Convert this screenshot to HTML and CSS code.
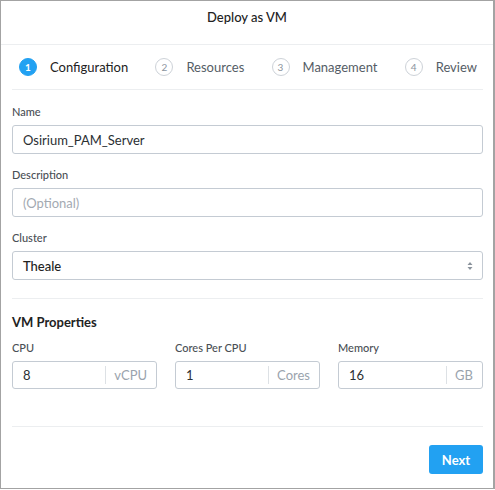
FILE: index.html
```html
<!DOCTYPE html>
<html>
<head>
<meta charset="utf-8">
<link rel="stylesheet" href="styles.css">
</head>
<body>
<div class="frame">
  <div class="header">Deploy as VM</div>
  <div class="steps">
    <div class="step active"><span class="num">1</span><span class="label">Configuration</span></div>
    <div class="step"><span class="num">2</span><span class="label">Resources</span></div>
    <div class="step"><span class="num">3</span><span class="label">Management</span></div>
    <div class="step"><span class="num">4</span><span class="label">Review</span></div>
  </div>
  <div class="form">
    <div class="field first">
      <div class="flabel">Name</div>
      <div class="input">Osirium_PAM_Server</div>
    </div>
    <div class="field">
      <div class="flabel">Description</div>
      <div class="input placeholder">(Optional)</div>
    </div>
    <div class="field">
      <div class="flabel">Cluster</div>
      <div class="input select"><span class="strong">Theale</span>
        <svg class="arrows" width="6" height="10" viewBox="0 0 6 10"><path d="M3 1 L5.5 4 H0.5 Z M3 9 L5.5 6 H0.5 Z" fill="#8a929b"/></svg>
      </div>
    </div>
    <div class="sep"></div>
    <div class="section">VM Properties</div>
    <div class="props">
      <div class="prop">
        <div class="flabel">CPU</div>
        <div class="input unit"><span class="val">8</span><span class="u">vCPU</span></div>
      </div>
      <div class="prop">
        <div class="flabel">Cores Per CPU</div>
        <div class="input unit"><span class="val">1</span><span class="u">Cores</span></div>
      </div>
      <div class="prop">
        <div class="flabel">Memory</div>
        <div class="input unit"><span class="val">16</span><span class="u">GB</span></div>
      </div>
    </div>
    <div class="sep sep2"></div>
    <div class="footer"><button class="next">Next</button></div>
  </div>
</div>
</body>
</html>
```

FILE: styles.css
```css
* { box-sizing: border-box; }
html, body { margin: 0; padding: 0; background: #fff; }
body { font-family: "Lato", "Open Sans", sans-serif; color: #333; }
.frame {
  width: 495px;
  height: 489px;
  border: 1px solid #a3a3a3;
  border-right-width: 2px;
  background: #fff;
}
.header {
  height: 44px;
  border-bottom: 1px solid #eceef0;
  text-align: center;
  font-size: 13px;
  font-weight: 500;
  line-height: 16px;
  padding-top: 8px;
  color: #222;
}
.steps {
  margin: 0 10px 0 11px;
  height: 45px;
  border-bottom: 1px solid #eceef0;
  display: flex;
  align-items: center;
  justify-content: space-between;
  padding: 0 6px 0 7px;
}
.step { display: flex; align-items: center; gap: 13px; }
.num {
  width: 18px; height: 18px; border-radius: 50%;
  border: 1px solid #cdd2d8;
  display: flex; align-items: center; justify-content: center;
  font-size: 10px; color: #8b949e;
}
.step .label { font-size: 13px; color: #555d66; }
.step.active .num { background: #22a1f2; border-color: #22a1f2; color: #fff; font-weight: 700; }
.step.active .label { color: #222; }
.form { padding: 0 10px 0 11px; }
.field { margin-top: 14px; }
.field.first { margin-top: 15px; }
.flabel { font-size: 11px; line-height: 14px; color: #4a4f55; font-weight: 500; margin-bottom: 6px; }
.input {
  height: 29px;
  border: 1px solid #c4cbd3;
  border-radius: 3px;
  display: flex; align-items: center;
  padding: 0 10px;
  font-size: 13px;
  color: #2b2f33;
}
.input.placeholder { color: #a3aab2; }
.input.select { justify-content: space-between; padding-right: 9px; }
.strong { font-weight: 500; color: #222; }
.sep { height: 1px; background: #eceef0; margin-top: 18px; }
.section { font-size: 13px; font-weight: 700; line-height: 16px; margin-top: 15px; color: #222; }
.props { display: grid; grid-template-columns: repeat(3, 145px); column-gap: 18px; margin-top: 11px; }
.prop .flabel { margin-bottom: 6px; }
.input.unit { height: 28px; padding: 0 0 0 10px; }
.input.unit .val { flex: 1; }
.input.unit .u {
  border-left: 1px solid #dde1e5;
  height: 18px; line-height: 18px;
  padding: 0 9px 0 8px;
  color: #9aa3ad;
}
.sep2 { margin-top: 37px; }
.footer { display: flex; justify-content: flex-end; margin-top: 18px; }
.next {
  width: 54px; height: 29px;
  background: #22a1f2;
  border: none; border-radius: 3px;
  color: #fff; font-family: inherit; font-size: 13px; font-weight: 700;
  padding: 0;
}
```
